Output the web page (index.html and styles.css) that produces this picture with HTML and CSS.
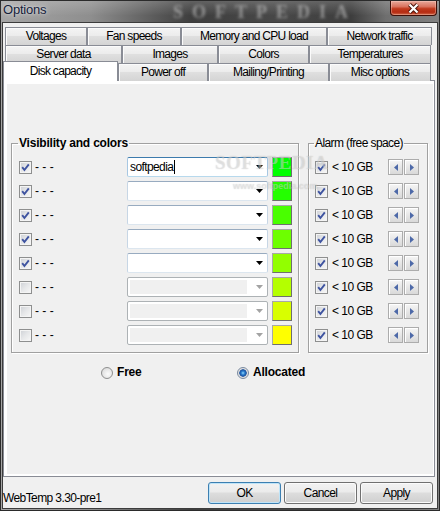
FILE: index.html
```html
<!DOCTYPE html>
<html lang="en">
<head>
<meta charset="utf-8">
<title>Options</title>
<link rel="stylesheet" href="styles.css">
</head>
<body>
<div class="window">
  <div class="titlebar">
    <span class="title">Options</span>
    <span class="title-watermark">SOFTPEDIA</span>
    <div class="close">
      <svg width="15" height="11" viewBox="0 0 15 11"><path d="M3.5 1.5 L11.5 9.5 M11.5 1.5 L3.5 9.5" stroke="#4a140a" stroke-width="4"/><path d="M3.5 1.5 L11.5 9.5 M11.5 1.5 L3.5 9.5" stroke="#ffffff" stroke-width="2.2"/></svg>
    </div>
  </div>
  <div class="client">
    <div class="tabs">
      <div class="tabrow row1">
        <div class="tab">Voltages</div>
        <div class="tab">Fan speeds</div>
        <div class="tab">Memory and CPU load</div>
        <div class="tab">Network traffic</div>
      </div>
      <div class="tabrow row2">
        <div class="tab">Server data</div>
        <div class="tab">Images</div>
        <div class="tab">Colors</div>
        <div class="tab">Temperatures</div>
      </div>
      <div class="tabrow row3">
        <div class="tab selected">Disk capacity</div>
        <div class="tab">Power off</div>
        <div class="tab">Mailing/Printing</div>
        <div class="tab">Misc options</div>
      </div>
    </div>
    <div class="page">
      <div class="panel">
        <div class="groups">
          <fieldset class="group vis">
            <legend>Visibility and colors</legend>
            <div class="vrow">
              <span class="cb"><svg width="9" height="9" viewBox="0 0 9 9"><path d="M1.2 4.2 L3.4 7 L7.8 1.3" stroke="#3e53a0" stroke-width="1.9" fill="none"/></svg></span>
              <span class="dash">- - -</span>
              <span class="combo focus"><span class="ctext">softpedia</span><span class="caret"></span><svg class="arrow" width="7" height="4" viewBox="0 0 7 4"><path d="M0 0H7L3.5 4Z" fill="#000"/></svg></span>
              <span class="swatch c1"></span>
            </div>
            <div class="vrow">
              <span class="cb"><svg width="9" height="9" viewBox="0 0 9 9"><path d="M1.2 4.2 L3.4 7 L7.8 1.3" stroke="#3e53a0" stroke-width="1.9" fill="none"/></svg></span>
              <span class="dash">- - -</span>
              <span class="combo"><span class="ctext"></span><svg class="arrow" width="7" height="4" viewBox="0 0 7 4"><path d="M0 0H7L3.5 4Z" fill="#000"/></svg></span>
              <span class="swatch c2"></span>
            </div>
            <div class="vrow">
              <span class="cb"><svg width="9" height="9" viewBox="0 0 9 9"><path d="M1.2 4.2 L3.4 7 L7.8 1.3" stroke="#3e53a0" stroke-width="1.9" fill="none"/></svg></span>
              <span class="dash">- - -</span>
              <span class="combo"><span class="ctext"></span><svg class="arrow" width="7" height="4" viewBox="0 0 7 4"><path d="M0 0H7L3.5 4Z" fill="#000"/></svg></span>
              <span class="swatch c3"></span>
            </div>
            <div class="vrow">
              <span class="cb"><svg width="9" height="9" viewBox="0 0 9 9"><path d="M1.2 4.2 L3.4 7 L7.8 1.3" stroke="#3e53a0" stroke-width="1.9" fill="none"/></svg></span>
              <span class="dash">- - -</span>
              <span class="combo"><span class="ctext"></span><svg class="arrow" width="7" height="4" viewBox="0 0 7 4"><path d="M0 0H7L3.5 4Z" fill="#000"/></svg></span>
              <span class="swatch c4"></span>
            </div>
            <div class="vrow">
              <span class="cb"><svg width="9" height="9" viewBox="0 0 9 9"><path d="M1.2 4.2 L3.4 7 L7.8 1.3" stroke="#3e53a0" stroke-width="1.9" fill="none"/></svg></span>
              <span class="dash">- - -</span>
              <span class="combo"><span class="ctext"></span><svg class="arrow" width="7" height="4" viewBox="0 0 7 4"><path d="M0 0H7L3.5 4Z" fill="#000"/></svg></span>
              <span class="swatch c5"></span>
            </div>
            <div class="vrow">
              <span class="cb"></span>
              <span class="dash">- - -</span>
              <span class="combo disabled"><span class="field"></span><svg class="arrow" width="7" height="4" viewBox="0 0 7 4"><path d="M0 0H7L3.5 4Z" fill="#a3a3a3"/></svg></span>
              <span class="swatch c6"></span>
            </div>
            <div class="vrow">
              <span class="cb"></span>
              <span class="dash">- - -</span>
              <span class="combo disabled"><span class="field"></span><svg class="arrow" width="7" height="4" viewBox="0 0 7 4"><path d="M0 0H7L3.5 4Z" fill="#a3a3a3"/></svg></span>
              <span class="swatch c7"></span>
            </div>
            <div class="vrow">
              <span class="cb"></span>
              <span class="dash">- - -</span>
              <span class="combo disabled"><span class="field"></span><svg class="arrow" width="7" height="4" viewBox="0 0 7 4"><path d="M0 0H7L3.5 4Z" fill="#a3a3a3"/></svg></span>
              <span class="swatch c8"></span>
            </div>
          </fieldset>
          <fieldset class="group alarm">
            <legend>Alarm (free space)</legend>
            <div class="arow"><span class="cb"><svg width="9" height="9" viewBox="0 0 9 9"><path d="M1.2 4.2 L3.4 7 L7.8 1.3" stroke="#3e53a0" stroke-width="1.9" fill="none"/></svg></span><span class="lbl">&lt; 10 GB</span><span class="spin"><span class="sbtn"><svg width="4" height="7" viewBox="0 0 4 7"><path d="M4 0V7L0 3.5Z" fill="#4d69a8"/></svg></span><span class="sbtn"><svg width="4" height="7" viewBox="0 0 4 7"><path d="M0 0V7L4 3.5Z" fill="#4d69a8"/></svg></span></span></div>
            <div class="arow"><span class="cb"><svg width="9" height="9" viewBox="0 0 9 9"><path d="M1.2 4.2 L3.4 7 L7.8 1.3" stroke="#3e53a0" stroke-width="1.9" fill="none"/></svg></span><span class="lbl">&lt; 10 GB</span><span class="spin"><span class="sbtn"><svg width="4" height="7" viewBox="0 0 4 7"><path d="M4 0V7L0 3.5Z" fill="#4d69a8"/></svg></span><span class="sbtn"><svg width="4" height="7" viewBox="0 0 4 7"><path d="M0 0V7L4 3.5Z" fill="#4d69a8"/></svg></span></span></div>
            <div class="arow"><span class="cb"><svg width="9" height="9" viewBox="0 0 9 9"><path d="M1.2 4.2 L3.4 7 L7.8 1.3" stroke="#3e53a0" stroke-width="1.9" fill="none"/></svg></span><span class="lbl">&lt; 10 GB</span><span class="spin"><span class="sbtn"><svg width="4" height="7" viewBox="0 0 4 7"><path d="M4 0V7L0 3.5Z" fill="#4d69a8"/></svg></span><span class="sbtn"><svg width="4" height="7" viewBox="0 0 4 7"><path d="M0 0V7L4 3.5Z" fill="#4d69a8"/></svg></span></span></div>
            <div class="arow"><span class="cb"><svg width="9" height="9" viewBox="0 0 9 9"><path d="M1.2 4.2 L3.4 7 L7.8 1.3" stroke="#3e53a0" stroke-width="1.9" fill="none"/></svg></span><span class="lbl">&lt; 10 GB</span><span class="spin"><span class="sbtn"><svg width="4" height="7" viewBox="0 0 4 7"><path d="M4 0V7L0 3.5Z" fill="#4d69a8"/></svg></span><span class="sbtn"><svg width="4" height="7" viewBox="0 0 4 7"><path d="M0 0V7L4 3.5Z" fill="#4d69a8"/></svg></span></span></div>
            <div class="arow"><span class="cb"><svg width="9" height="9" viewBox="0 0 9 9"><path d="M1.2 4.2 L3.4 7 L7.8 1.3" stroke="#3e53a0" stroke-width="1.9" fill="none"/></svg></span><span class="lbl">&lt; 10 GB</span><span class="spin"><span class="sbtn"><svg width="4" height="7" viewBox="0 0 4 7"><path d="M4 0V7L0 3.5Z" fill="#4d69a8"/></svg></span><span class="sbtn"><svg width="4" height="7" viewBox="0 0 4 7"><path d="M0 0V7L4 3.5Z" fill="#4d69a8"/></svg></span></span></div>
            <div class="arow"><span class="cb"><svg width="9" height="9" viewBox="0 0 9 9"><path d="M1.2 4.2 L3.4 7 L7.8 1.3" stroke="#3e53a0" stroke-width="1.9" fill="none"/></svg></span><span class="lbl">&lt; 10 GB</span><span class="spin"><span class="sbtn"><svg width="4" height="7" viewBox="0 0 4 7"><path d="M4 0V7L0 3.5Z" fill="#4d69a8"/></svg></span><span class="sbtn"><svg width="4" height="7" viewBox="0 0 4 7"><path d="M0 0V7L4 3.5Z" fill="#4d69a8"/></svg></span></span></div>
            <div class="arow"><span class="cb"><svg width="9" height="9" viewBox="0 0 9 9"><path d="M1.2 4.2 L3.4 7 L7.8 1.3" stroke="#3e53a0" stroke-width="1.9" fill="none"/></svg></span><span class="lbl">&lt; 10 GB</span><span class="spin"><span class="sbtn"><svg width="4" height="7" viewBox="0 0 4 7"><path d="M4 0V7L0 3.5Z" fill="#4d69a8"/></svg></span><span class="sbtn"><svg width="4" height="7" viewBox="0 0 4 7"><path d="M0 0V7L4 3.5Z" fill="#4d69a8"/></svg></span></span></div>
            <div class="arow"><span class="cb"><svg width="9" height="9" viewBox="0 0 9 9"><path d="M1.2 4.2 L3.4 7 L7.8 1.3" stroke="#3e53a0" stroke-width="1.9" fill="none"/></svg></span><span class="lbl">&lt; 10 GB</span><span class="spin"><span class="sbtn"><svg width="4" height="7" viewBox="0 0 4 7"><path d="M4 0V7L0 3.5Z" fill="#4d69a8"/></svg></span><span class="sbtn"><svg width="4" height="7" viewBox="0 0 4 7"><path d="M0 0V7L4 3.5Z" fill="#4d69a8"/></svg></span></span></div>
          </fieldset>
        </div>
        <div class="radios">
          <label class="radio"><span class="rb"></span><span class="rtext">Free</span></label>
          <label class="radio"><span class="rb on"></span><span class="rtext">Allocated</span></label>
        </div>
      </div>
      <div class="watermark">
        <span class="wm-big">SOFTPEDIA</span>
        <span class="wm-small">www.softpedia.com</span>
      </div>
    </div>
    <div class="footer">
      <span class="version">WebTemp 3.30-pre1</span>
      <div class="buttons">
        <button class="btn default">OK</button>
        <button class="btn">Cancel</button>
        <button class="btn">Apply</button>
      </div>
    </div>
  </div>
</div>
</body>
</html>
```

FILE: styles.css
```css
* { box-sizing: border-box; }
html, body { margin: 0; padding: 0; }
body {
  width: 440px;
  height: 511px;
  overflow: hidden;
  font-family: "Liberation Sans", Arial, sans-serif;
  font-size: 12px;
  letter-spacing: -0.6px;
  color: #000;
  background: #6f6f6f;
}

.window {
  width: 440px;
  height: 511px;
  border: 1px solid #2b2b2b;
  padding: 0 1px 1px 1px;
  background: linear-gradient(to right, #a5a5a5 0px, #8e8e8e 90px, #5e5e5e 150px, #3e3e3e 190px, #484848 280px, #3d3d3d 350px, #6f6f6f 385px, #828282 440px);
}

/* title bar */
.titlebar {
  height: 21px;
  margin: 0 -1px;
  display: flex;
  align-items: flex-start;
  position: relative;
  background: linear-gradient(rgba(255,255,255,0.18), rgba(255,255,255,0) 70%);
}
.title {
  margin: 1px 0 0 2px;
  font-size: 13px;
  line-height: 16px;
  letter-spacing: -0.2px;
  color: #15213a;
  text-shadow: 0 0 6px rgba(255,255,255,0.7), 0 0 2px rgba(255,255,255,0.5);
  position: relative;
  z-index: 1;
}
.title-watermark {
  position: absolute;
  left: 172px;
  top: 1px;
  font-family: "Liberation Serif", serif;
  font-weight: bold;
  font-size: 18px;
  line-height: 20px;
  letter-spacing: 9px;
  color: rgba(235,235,235,0.45);
  filter: blur(1.4px);
  white-space: nowrap;
}
.close {
  margin-left: auto;
  margin-right: 2px;
  width: 47px;
  height: 15px;
  border: 1px solid #3e0f08;
  border-top: none;
  border-radius: 0 0 4px 4px;
  background: linear-gradient(#e9a99b 0%, #d9735f 40%, #c13a1e 55%, #b52b12 80%, #d26a4b 100%);
  box-shadow: inset 0 0 0 1px rgba(255,220,210,0.35);
  display: flex;
  align-items: center;
  justify-content: center;
  position: relative;
  z-index: 1;
}

/* client */
.client {
  height: 487px;
  border: 1px solid #3c3c3c;
  background: #f0f0f0;
  padding-top: 4px;
  position: relative;
  z-index: 1;
}

/* tabs */
.tabs {
  height: 53px;
  position: relative;
  z-index: 2;
}
.tabrow { display: grid; }
.row1 { grid-template-columns: 82px 94px 146px 105px; margin-left: 2px; height: 18px; }
.row2 { grid-template-columns: 117px 96px 91px 122px; margin-left: 2px; height: 18px; }
.row3 { grid-template-columns: 115px 90px 121px 102px; height: 17px; }
.tab {
  border: 1px solid #898c95;
  border-bottom: none;
  text-align: center;
  line-height: 17px;
  letter-spacing: -0.7px;
  white-space: nowrap;
  overflow: hidden;
  background: linear-gradient(#f4f4f4 0%, #ececec 45%, #dfdfdf 50%, #d4d4d4 100%);
  box-shadow: inset 1px 1px 0 #fbfbfb;
}
.row3 .tab { line-height: 16px; }
.row3 .tab.selected {
  background: #fff;
  box-shadow: none;
  margin-top: -2px;
  height: 20px;
  line-height: 18px;
  position: relative;
  z-index: 3;
}

/* page */
.page {
  width: 432px;
  height: 397px;
  border: 1px solid #898c95;
  background: #fff;
  padding: 3px 1px 2px 3px;
  position: relative;
  overflow: hidden;
}
.panel {
  height: 390px;
  background: #f0f0f0;
  padding-top: 53px;
}

.groups {
  display: flex;
  align-items: flex-start;
  margin-left: 4px;
}
.group {
  margin: 0;
  border: 1px solid #a0a0a0;
  box-shadow: inset 1px 1px 0 #fff, 1px 1px 0 #fff;
  min-width: 0;
}
.group legend {
  padding: 0 1px;
  margin-left: -1px;
  line-height: 13px;
}
.vis {
  width: 288px;
  padding: 7px 6px 7px 7px;
}
.vis legend {
  font-weight: bold;
  letter-spacing: -0.2px;
}
.alarm {
  width: 120px;
  margin-left: 9px;
  padding: 7px 7px 7px 6px;
}

/* rows */
.vrow, .arow {
  display: flex;
  align-items: center;
  height: 20px;
}
.vrow + .vrow, .arow + .arow { margin-top: 4px; }

.cb {
  flex: none;
  width: 13px;
  height: 13px;
  border: 1px solid #8e8f8f;
  background: linear-gradient(135deg, #cdd0d5 0%, #e6e7e9 50%, #f8f8f8 100%);
  box-shadow: inset 0 0 0 1px #f4f4f4;
  display: flex;
  align-items: center;
  justify-content: center;
}
.dash {
  width: 95px;
  padding-left: 3px;
  letter-spacing: 0;
}

.combo {
  width: 141px;
  height: 20px;
  border: 1px solid;
  border-color: #98abc0 #c7d6e5 #dce6ef #c7d6e5;
  border-radius: 2px;
  background: #fff;
  display: flex;
  align-items: center;
  padding-left: 2px;
}
.combo.focus { border-color: #3d7bad #a7c7e2 #b7d9ed #a7c7e2; }
.combo.disabled {
  border-color: #adb2b5;
  padding: 2px 0 2px 2px;
}
.ctext { line-height: 14px; }
.caret {
  width: 1px;
  height: 14px;
  background: #000;
  margin-left: 1px;
}
.field {
  width: 117px;
  height: 100%;
  background: #f0f0f0;
}
.arrow {
  margin-left: auto;
  margin-right: 4px;
  flex: none;
}

.swatch {
  margin-left: 4px;
  width: 20px;
  height: 20px;
  border: 1px solid;
  border-color: #a8a8a8 #6f6f6f #6f6f6f #a8a8a8;
}
.c1 { background: #00ff00; }
.c2 { background: #24ff00; }
.c3 { background: #49ff00; }
.c4 { background: #6dff00; }
.c5 { background: #92ff00; }
.c6 { background: #b4ff00; }
.c7 { background: #d8ff00; }
.c8 { background: #ffff00; }

.lbl {
  width: 60px;
  padding-left: 4px;
  white-space: nowrap;
  letter-spacing: -0.5px;
}
.spin {
  display: flex;
  gap: 1px;
}
.sbtn {
  width: 15px;
  height: 16px;
  border: 1px solid #acacac;
  background: linear-gradient(#f6f6f6, #e4e4e4 60%, #d9d9d9);
  box-shadow: inset 1px 1px 0 #fff;
  display: flex;
  align-items: center;
  justify-content: center;
}

/* radios */
.radios {
  display: grid;
  grid-template-columns: 136px auto;
  margin: 14px 0 0 94px;
}
.radio {
  display: flex;
  align-items: center;
  gap: 4px;
  font-weight: bold;
  letter-spacing: -0.2px;
}
.rb {
  width: 12px;
  height: 12px;
  border-radius: 50%;
  border: 1px solid #8e8f8f;
  background: radial-gradient(circle at 60% 60%, #fbfbfb 0%, #e4e4e4 60%, #cfcfcf 100%);
}
.rb.on {
  border-color: #7a8aa0;
  background: radial-gradient(circle, #8fd8ff 0px, #2a7ccc 1.8px, #194f9e 3.4px, #dadada 4px, #f2f2f2 6px);
}
.rtext { line-height: 12px; margin-top: -2px; }

/* faint watermark over the panel */
.watermark {
  position: absolute;
  left: 211px;
  top: 72px;
  display: flex;
  flex-direction: column;
  align-items: flex-start;
  pointer-events: none;
  color: rgba(255,255,255,0.35);
  text-shadow: 0 0 1px rgba(110,110,110,0.35);
}
.wm-big {
  font-family: "Liberation Serif", serif;
  font-weight: bold;
  font-size: 19px;
  line-height: 20px;
  letter-spacing: 0.5px;
}
.wm-small {
  margin: 8px 0 0 18px;
  font-size: 9px;
  font-weight: bold;
  letter-spacing: 0;
  line-height: 11px;
}

/* footer */
.footer {
  height: 31px;
  display: flex;
  align-items: flex-end;
  padding: 5px 4px 4px 0;
}
.version {
  line-height: 13px;
  margin-bottom: -1px;
  white-space: nowrap;
}
.buttons {
  margin-left: auto;
  display: flex;
  gap: 3px;
}
.btn {
  width: 73px;
  height: 22px;
  margin: 0;
  padding: 0;
  font: inherit;
  letter-spacing: -0.6px;
  color: #000;
  border: 1px solid #707070;
  border-radius: 3px;
  background: linear-gradient(#f2f2f2 0%, #ebebeb 45%, #dddddd 50%, #cfcfcf 100%);
  box-shadow: inset 0 0 0 1px #fbfbfb;
}
.btn.default {
  border-color: #3c7fb1;
  box-shadow: inset 0 0 0 1px #bfe4f8;
}
```
